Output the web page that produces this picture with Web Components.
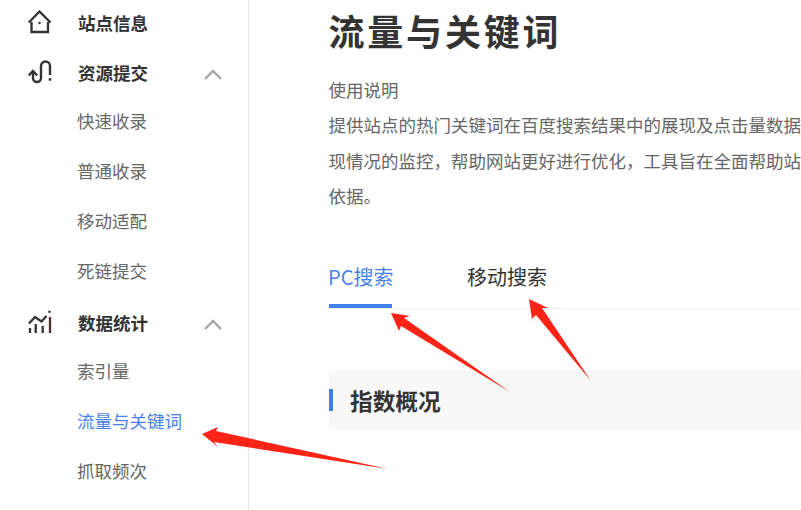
<!DOCTYPE html>
<html lang="zh">
<head>
<meta charset="utf-8">
<title>流量与关键词</title>
<style>
  html, body { margin: 0; height: 100%; background: #fff; overflow: hidden; }
  body { font-family: "Noto Sans CJK SC", "Liberation Sans", sans-serif; position: relative; }
  app-shell { height: 510px; }
</style>
</head>
<body>
<template id="icon-home"><svg width="24" height="24" viewBox="0 0 24 24" fill="none" stroke="#333" stroke-width="2.300"><path d="M.8 12.500 11.500 1.500 22.500 12.500"/><path d="M3.500 12v10h16.500V12"/><circle cx="11.500" cy="13" r="1.200" fill="#333" stroke="none"/></svg></template>
<template id="icon-submit"><svg width="24" height="24" viewBox="0 0 24 24" fill="none" stroke="#333" stroke-width="2.400"><path d="M.8 15.500 5 11 9.200 15.500"/><path d="M5 12v6a4 4 0 0 0 8 0V6a4.500 4.500 0 0 1 9 0V15"/><circle cx="22" cy="19.500" r="1.400" fill="#333" stroke="none"/></svg></template>
<template id="icon-stats"><svg width="24" height="24" viewBox="0 0 24 24" fill="none" stroke="#333" stroke-width="2.300"><path d="M1 13.500 7 7 13.500 11.500 18.500 6"/><path d="M2 18v5M7.700 14v9M14.700 16v7"/><path d="M22 7v16" stroke="#4a3030"/><circle cx="21.500" cy="1.700" r="1.300" fill="#333" stroke="none"/></svg></template>

<app-shell>
  <side-nav slot="nav">
    <nav-group label="站点信息" icon="icon-home"></nav-group>
    <nav-group label="资源提交" icon="icon-submit" open>
      <nav-link>快速收录</nav-link>
      <nav-link>普通收录</nav-link>
      <nav-link>移动适配</nav-link>
      <nav-link>死链提交</nav-link>
    </nav-group>
    <nav-group label="数据统计" icon="icon-stats" open>
      <nav-link>索引量</nav-link>
      <nav-link active>流量与关键词</nav-link>
      <nav-link>抓取频次</nav-link>
    </nav-group>
  </side-nav>
  <page-intro heading="流量与关键词">
    <p>使用说明</p>
    <p>提供站点的热门关键词在百度搜索结果中的展现及点击量数据</p>
    <p>现情况的监控，帮助网站更好进行优化，工具旨在全面帮助站</p>
    <p>依据。</p>
  </page-intro>
  <tab-bar>
    <tab-item active>PC搜索</tab-item>
    <tab-item>移动搜索</tab-item>
  </tab-bar>
  <section-title>指数概况</section-title>
</app-shell>
<red-arrows></red-arrows>

<script>
class AppShell extends HTMLElement {
  connectedCallback() {
    this.attachShadow({ mode: 'open' });
    this.shadowRoot.innerHTML = `
      <style>
        :host { display: flex; width: 801px; overflow: hidden; }
        .side { flex: 0 0 248px; border-right: 1px solid #e8e8e8; }
        main { flex: 1; min-width: 0; padding: 0 0 0 80px; }
      </style>
      <div class="side"><slot name="nav"></slot></div>
      <main><slot></slot></main>
    `;
  }
}

class SideNav extends HTMLElement {
  connectedCallback() {
    this.attachShadow({ mode: 'open' });
    this.shadowRoot.innerHTML = `
      <style>
        :host { display: block; margin-top: -1px; }
      </style>
      <slot></slot>
    `;
  }
}

class NavGroup extends HTMLElement {
  connectedCallback() {
    this.attachShadow({ mode: 'open' });
    const icon = document.getElementById(this.getAttribute('icon'));
    this.shadowRoot.innerHTML = `
      <style>
        :host { display: block; }
        .head {
          display: flex;
          align-items: center;
          box-sizing: border-box;
          height: 50px;
          padding: 0 26px 4px 28px;
          font-size: 17.5px;
          font-weight: 700;
          color: #333;
        }
        .ic { width: 24px; height: 24px; margin-right: 26px; }
        .ic svg { display: block; }
        .label { flex: 1; }
        .arrow { display: none; margin-top: 4px; }
        :host([open]) .arrow { display: block; }
        :host([open]) .items { display: block; margin: -3px 0 3px; }
      </style>
      <div class="head">
        <span class="ic"></span>
        <span class="label">${this.getAttribute('label')}</span>
        <svg class="arrow" width="18" height="11" viewBox="0 0 18 11" fill="none" stroke="#a6a6a6" stroke-width="2.400"><path d="M1 10 9 2l8 8"/></svg>
      </div>
      <div class="items"><slot></slot></div>
    `;
    this.shadowRoot.querySelector('.ic').appendChild(icon.content.cloneNode(true));
  }
}

class NavLink extends HTMLElement {
  connectedCallback() {
    this.attachShadow({ mode: 'open' });
    this.shadowRoot.innerHTML = `
      <style>
        :host {
          display: block;
          height: 50px;
          line-height: 50px;
          padding-left: 77px;
          font-size: 17.5px;
          color: #666;
        }
        :host([active]) { color: #4a7fe8; }
      </style>
      <slot></slot>
    `;
  }
}

class PageIntro extends HTMLElement {
  connectedCallback() {
    this.attachShadow({ mode: 'open' });
    this.shadowRoot.innerHTML = `
      <style>
        :host { display: block; margin-left: -0.5px; }
        h1 {
          margin: 0;
          height: 72px;
          line-height: 60px;
          font-size: 36px;
          font-weight: 700;
          letter-spacing: 2.8px;
          color: #333;
        }
        .desc { font-size: 17.5px; line-height: 35.3px; color: #666; white-space: nowrap; }
        ::slotted(p) { margin: 0; }
      </style>
      <h1>${this.getAttribute('heading')}</h1>
      <div class="desc"><slot></slot></div>
    `;
  }
}

class TabBar extends HTMLElement {
  connectedCallback() {
    this.attachShadow({ mode: 'open' });
    this.shadowRoot.innerHTML = `
      <style>
        :host {
          display: flex;
          gap: 75px;
          margin-top: 35px;
          height: 60px;
          border-bottom: 1px solid #eee;
        }
      </style>
      <slot></slot>
    `;
  }
}

class TabItem extends HTMLElement {
  connectedCallback() {
    this.attachShadow({ mode: 'open' });
    this.shadowRoot.innerHTML = `
      <style>
        :host {
          display: block;
          line-height: 57px;
          height: 56px;
          font-size: 20px;
          color: #333;
        }
        :host([active]) {
          width: 63px;
          text-indent: -1px;
          white-space: nowrap;
          color: #4a7fe8;
          border-bottom: 4px solid #4080ee;
        }
      </style>
      <slot></slot>
    `;
  }
}

class SectionTitle extends HTMLElement {
  connectedCallback() {
    this.attachShadow({ mode: 'open' });
    this.shadowRoot.innerHTML = `
      <style>
        :host {
          display: flex;
          align-items: center;
          margin-top: 62px;
          height: 58px;
          background: #f8f8f8;
          font-size: 22.7px;
          font-weight: 700;
          color: #333;
        }
        .bar { width: 4px; height: 22px; background: #4080ee; margin-right: 17px; }
      </style>
      <span class="bar"></span>
      <slot></slot>
    `;
  }
}

// annotation arrows drawn on top of the screenshot
class RedArrows extends HTMLElement {
  connectedCallback() {
    this.attachShadow({ mode: 'open' });
    this.shadowRoot.innerHTML = `
      <style>
        :host { position: absolute; left: 0; top: 0; width: 801px; height: 510px; pointer-events: none; }
        svg { display: block; }
      </style>
      <svg width="801" height="510" fill="#fb2416">
        <polygon points="202,434 218,427 216,431 388,469 214,442 218,447"/>
        <polygon points="391,313 410,316 404,318 510,392 401,326 399,331"/>
        <polygon points="529,299 548,308 542,308 591,381 536,315 532,319"/>
      </svg>
    `;
  }
}

customElements.define('app-shell', AppShell);
customElements.define('side-nav', SideNav);
customElements.define('nav-group', NavGroup);
customElements.define('nav-link', NavLink);
customElements.define('page-intro', PageIntro);
customElements.define('tab-bar', TabBar);
customElements.define('tab-item', TabItem);
customElements.define('section-title', SectionTitle);
customElements.define('red-arrows', RedArrows);
</script>
</body>
</html>
